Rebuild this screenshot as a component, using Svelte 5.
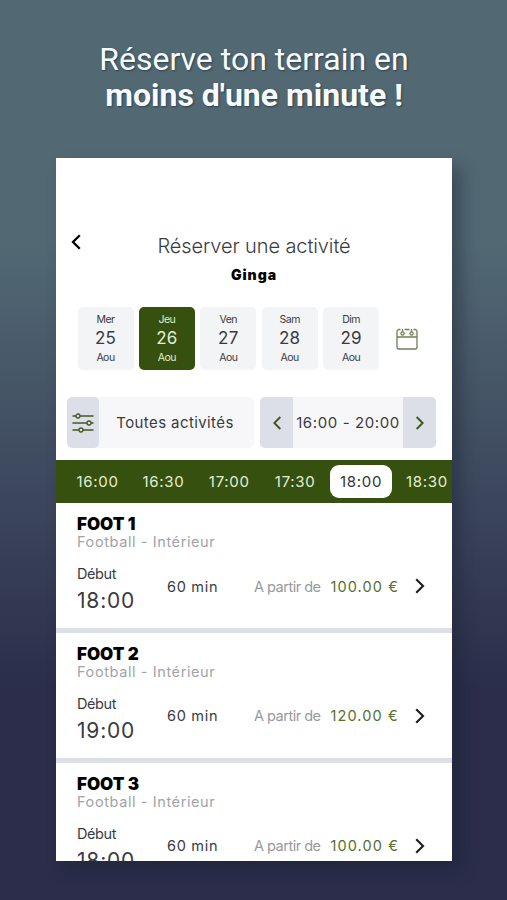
<script lang="ts">
	interface Slot {
		name: string;
		start: string;
		price: string;
	}

	const days = [
		{ label: 'Mer', day: 25 },
		{ label: 'Jeu', day: 26 },
		{ label: 'Ven', day: 27 },
		{ label: 'Sam', day: 28 },
		{ label: 'Dim', day: 29 }
	];
	const times = ['16:00', '16:30', '17:00', '17:30', '18:00', '18:30'];
	const slots: Slot[] = [
		{ name: 'FOOT 1', start: '18:00', price: '100.00 €' },
		{ name: 'FOOT 2', start: '19:00', price: '120.00 €' },
		{ name: 'FOOT 3', start: '18:00', price: '100.00 €' }
	];

	let selectedDay = $state(26);
	let selectedTime = $state('18:00');
</script>

{#snippet chevron(direction: 'left' | 'right')}
	<svg class="chevron" viewBox="0 0 10 16" aria-hidden="true">
		<path d={direction === 'left' ? 'M8.8 1.2 2 8l6.8 6.8' : 'M1.2 1.2 8 8l-6.8 6.8'} />
	</svg>
{/snippet}

<main class="promo">
	<h1>Réserve ton terrain en<strong>moins d'une minute !</strong></h1>

	<section class="screen">
		<header class="screen-header">
			<button class="back" aria-label="Retour">{@render chevron('left')}</button>
			<div class="heading">
				<h2>Réserver une activité</h2>
				<p>Ginga</p>
			</div>
		</header>

		<div class="days">
			{#each days as d (d.day)}
				<button class="day" class:selected={selectedDay === d.day} onclick={() => (selectedDay = d.day)}>
					<span>{d.label}</span>
					<b>{d.day}</b>
					<span>Aou</span>
				</button>
			{/each}
			<button class="calendar" aria-label="Calendrier">
				<svg viewBox="0 0 22 22" aria-hidden="true">
					<path d="M4.5 1.5H3a2 2 0 0 0-2 2V19a2 2 0 0 0 2 2h16a2 2 0 0 0 2-2V3.5a2 2 0 0 0-2-2h-1.5M8.5 1.5h5M1 9h20M6.5 1v3M15.5 1v3" />
					<circle cx="6.5" cy="5.5" r="1.6" />
					<circle cx="15.5" cy="5.5" r="1.6" />
				</svg>
			</button>
		</div>

		<div class="filters">
			<button class="activity">
				<span class="filter-icon">
					<svg viewBox="0 0 22 20" aria-hidden="true">
						<path d="M.5 3h21M.5 10h21M.5 17h21" />
						<circle cx="6" cy="3" r="2" />
						<circle cx="17" cy="10" r="2" />
						<circle cx="9" cy="17" r="2" />
					</svg>
				</span>
				<span class="activity-label">Toutes activités</span>
			</button>
			<div class="range">
				<button aria-label="Avant">{@render chevron('left')}</button>
				<span>16:00 - 20:00</span>
				<button aria-label="Après">{@render chevron('right')}</button>
			</div>
		</div>

		<nav class="times">
			{#each times as time (time)}
				<button class:selected={selectedTime === time} onclick={() => (selectedTime = time)}>{time}</button>
			{/each}
		</nav>

		{#each slots as slot (slot.name)}
			<article class="slot">
				<h3>{slot.name}</h3>
				<p class="sport">Football - Intérieur</p>
				<div class="details">
					<div class="start">
						<span class="start-label">Début</span>
						<span class="start-time">{slot.start}</span>
					</div>
					<span class="duration">60 min</span>
					<span class="from">A partir de</span>
					<span class="price">{slot.price}</span>
					{@render chevron('right')}
				</div>
			</article>
		{/each}
	</section>
</main>

<style>
	:global(body) {
		margin: 0;
	}

	.promo {
		box-sizing: border-box;
		height: 900px;
		padding: 40.5px 55px 0 56px;
		overflow: hidden;
		background: linear-gradient(#526974 0, #526974 240px, #2b2d4b 690px, #2b2d4b 100%);
		font-family: Inter, 'Liberation Sans', sans-serif;
		color: #3b3b3f;
	}

	h1,
	h2,
	h3,
	p {
		margin: 0;
	}

	h1 {
		height: 117px;
		font: 400 32px/36px Roboto, sans-serif;
		color: #f7fcff;
		text-align: center;
		text-shadow: 1px 1px 2px rgba(20, 35, 45, 0.6);
		white-space: nowrap;
	}

	h1 strong {
		display: block;
		font-weight: 700;
	}

	button {
		padding: 0;
		border: 0;
		background: none;
		font: inherit;
		color: inherit;
		cursor: pointer;
	}

	svg {
		display: block;
		fill: none;
		stroke: #42591f;
	}

	.chevron {
		width: 10px;
		height: 16px;
		stroke: #222226;
		stroke-width: 2.2;
	}

	.screen {
		height: 703px;
		overflow: hidden;
		background: #fff;
		box-shadow: 9px 9px 16px rgba(25, 34, 48, 0.42);
	}

	.screen-header {
		display: grid;
		grid-template-columns: 40px 1fr 40px;
		padding-top: 76px;
		height: 73.5px;
	}

	.back {
		align-self: start;
		justify-self: center;
	}

	.back .chevron {
		stroke: #000;
		stroke-width: 2.3;
	}

	.heading {
		text-align: center;
	}

	h2 {
		font-size: 20px;
		font-weight: 300;
		line-height: 25px;
		letter-spacing: -0.1px;
	}

	.heading p {
		font-size: 14px;
		font-weight: 900;
		line-height: 31px;
		letter-spacing: 1px;
		color: #000;
	}

	.days {
		display: flex;
		gap: 5.4px;
		padding-left: 21.5px;
	}

	.day {
		display: flex;
		flex-direction: column;
		align-items: center;
		width: 56px;
		height: 63px;
		padding-top: 3px;
		box-sizing: border-box;
		border-radius: 5px;
		background: #f2f4f6;
	}

	.day span {
		font-size: 10.5px;
		line-height: 19px;
		letter-spacing: -0.5px;
	}

	.day b {
		font-size: 17px;
		font-weight: 400;
		line-height: 19px;
		letter-spacing: 0.2px;
	}

	.day.selected {
		background: #365010;
		color: #e3efd2;
	}

	.calendar {
		margin-left: 12px;
	}

	.calendar svg {
		width: 22px;
		height: 22px;
		stroke: #6f8151;
		stroke-width: 1.3;
	}

	.filters {
		display: flex;
		gap: 6px;
		padding: 27px 16px 12px 11px;
		height: 51px;
	}

	.activity,
	.range {
		display: flex;
		overflow: hidden;
		border-radius: 5px;
		background: #f7f7fa;
		font-size: 15px;
	}

	.activity {
		width: 187px;
	}

	.filter-icon {
		display: flex;
		align-items: center;
		justify-content: center;
		width: 32px;
		height: 100%;
		border-radius: 5px;
		background: #dcdee8;
	}

	.filter-icon svg {
		width: 22px;
		height: 20px;
		stroke-width: 1.3;
	}

	.filter-icon circle {
		fill: #dcdee8;
	}

	.activity-label {
		flex: 1;
		align-self: center;
		padding-right: 3px;
		text-align: center;
		letter-spacing: 0.4px;
	}

	.range {
		flex: 1;
	}

	.range button {
		display: flex;
		flex: none;
		align-items: center;
		justify-content: center;
		width: 33px;
		background: #dcdee8;
	}

	.range .chevron {
		height: 14px;
		stroke: #42591f;
	}

	.range span {
		flex: 1;
		align-self: center;
		text-align: center;
		letter-spacing: 0.6px;
		white-space: nowrap;
	}

	.times {
		display: flex;
		align-items: center;
		gap: 3.9px;
		height: 43px;
		padding-left: 10.5px;
		overflow: hidden;
		background: #365010;
	}

	.times button {
		flex: 0 0 62px;
		height: 33px;
		border-radius: 9px;
		font-size: 15px;
		letter-spacing: 0.7px;
		color: #e3efd2;
	}

	.times button.selected {
		background: #fff;
		color: #333337;
	}

	.slot {
		box-sizing: border-box;
		height: 129.8px;
		padding: 11px 21px 0;
		border-bottom: 5px solid #dcdee8;
	}

	h3 {
		font-size: 17px;
		font-weight: 900;
		line-height: 20px;
		color: #000;
	}

	.sport {
		font-size: 14.5px;
		line-height: 16px;
		letter-spacing: 0.6px;
		color: #a3a3a6;
	}

	.details {
		display: grid;
		grid-template-columns: 90px 87px 76.5px 84.5px 10px;
		align-items: center;
		margin-top: 13px;
		font-size: 14.5px;
		white-space: nowrap;
	}

	.details > :not(.start) {
		margin-bottom: 7px;
	}

	.start-label,
	.start-time {
		display: block;
	}

	.start-label {
		line-height: 22px;
		letter-spacing: -0.4px;
	}

	.start-time {
		font-size: 21px;
		line-height: 31px;
		letter-spacing: 0.8px;
	}

	.duration {
		letter-spacing: 0.7px;
	}

	.from {
		letter-spacing: -0.5px;
		color: #99999c;
	}

	.price {
		letter-spacing: 1.1px;
		color: #55702f;
	}
</style>
